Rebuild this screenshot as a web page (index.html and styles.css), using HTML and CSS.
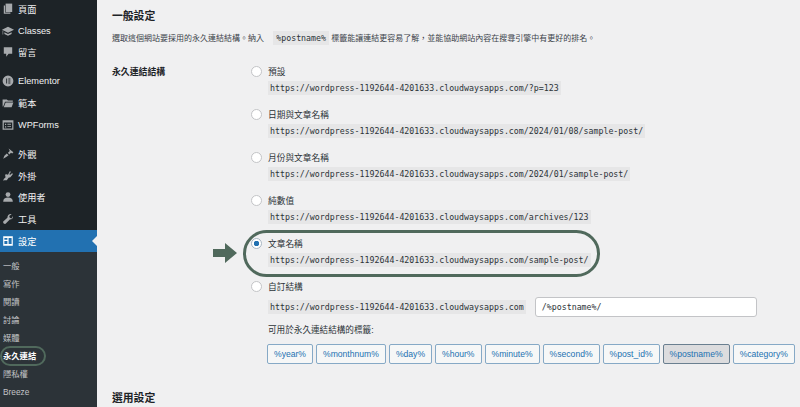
FILE: index.html
```html
<!DOCTYPE html>
<html lang="zh-Hant">
<head>
    <meta charset="UTF-8">
    <title>永久連結設定</title>
    <link rel="stylesheet" href="styles.css">
</head>
<body>
    <div class="sidebar">
        <div class="menu-group">
            <div class="menu-item">
                <svg class="icon" viewBox="0 0 20 20"><path d="M6 1h11v14H6z"/><path d="M3 4h2v12h9v2H3z"/></svg>頁面
            </div>
            <div class="menu-item">
                <svg class="icon" viewBox="0 0 20 20"><path d="M10 3 20 8l-10 5L0 8z"/><path d="M4 12l6 3 6-3v3l-6 3-6-3zM1 9h1v7H1z"/></svg>Classes
            </div>
            <div class="menu-item">
                <svg class="icon" viewBox="0 0 20 20"><path d="M3 2h14v11h-6l-4 5v-5H3z"/></svg>留言
            </div>
        </div>
        <div class="menu-group">
            <div class="menu-item">
                <svg class="icon" viewBox="0 0 20 20"><path fill-rule="evenodd" d="M10 1a9 9 0 1 0 0 18 9 9 0 0 0 0-18zM7 6h1.500v8H7zM10.500 6H14v1.500h-3.500zM10.500 9.200H14v1.500h-3.500zM10.500 12.500H14V14h-3.500z"/></svg>Elementor
            </div>
            <div class="menu-item">
                <svg class="icon" viewBox="0 0 20 20"><path d="M1 4h7l2 2h8v2H5l-3 8H1z"/><path d="M6 9h13l-3 8H3z"/></svg>範本
            </div>
            <div class="menu-item">
                <svg class="icon" viewBox="0 0 20 20"><path fill-rule="evenodd" d="M1 2h18v16H1zM3 6v10h14V6zM5 8h2v2H5zM9 8h6v1.500H9zM5 12h2v2H5zM9 12h6v1.500H9z"/></svg>WPForms
            </div>
        </div>
        <div class="menu-group last">
            <div class="menu-item">
                <svg class="icon" viewBox="0 0 20 20"><path d="M11 1l8 6-2 2-2-1-3 3-2-3 3-3-1-2zM8 9l3 3-4 3-5 3 2-5z"/></svg>外觀
            </div>
            <div class="menu-item">
                <svg class="icon" viewBox="0 0 20 20"><path d="M13 2l2 1-3 4 2 1 3-3 1 2-4 5-3 1-3 4H4l-2 1 1-3 3-3-1-4 2-1 3 1z"/></svg>外掛
            </div>
            <div class="menu-item">
                <svg class="icon" viewBox="0 0 20 20"><circle cx="10" cy="6" r="4"/><path d="M2 18c0-5 3-7 8-7s8 2 8 7z"/></svg>使用者
            </div>
            <div class="menu-item">
                <svg class="icon" viewBox="0 0 20 20"><path d="M18 5c1 3-1 6-5 6L6 18c-2 1-5-2-4-4l7-6c0-4 3-7 7-6l-4 3 1 3 3 1z"/></svg>工具
            </div>
            <div class="menu-item active">
                <svg class="icon" viewBox="0 0 20 20"><path fill-rule="evenodd" d="M2 2h16v16H2zM4 5v3h5V5zM11 5v10h5V5zM4 10v5h5v-5z"/></svg>設定
            </div>
        </div>
        <div class="submenu">
            <div class="sub-item">一般</div>
            <div class="sub-item">寫作</div>
            <div class="sub-item">閱讀</div>
            <div class="sub-item">討論</div>
            <div class="sub-item">媒體</div>
            <div class="sub-item current">永久連結</div>
            <div class="sub-item">隱私權</div>
            <div class="sub-item">Breeze</div>
        </div>
        <div class="side-ring"></div>
    </div>

    <div class="main">
        <h2 class="title">一般設定</h2>
        <p class="intro">選取這個網站要採用的永久連結結構。納入 <code class="tag-code">%postname%</code> 標籤能讓連結更容易了解，並能協助網站內容在搜尋引擎中有更好的排名。</p>

        <div class="form-row">
            <div class="form-label">永久連結結構</div>
            <div class="options">
                <div class="option">
                    <div class="option-name"><span class="radio"></span>預設</div>
                    <code class="url">https://wordpress-1192644-4201633.cloudwaysapps.com/?p=123</code>
                </div>
                <div class="option">
                    <div class="option-name"><span class="radio"></span>日期與文章名稱</div>
                    <code class="url">https://wordpress-1192644-4201633.cloudwaysapps.com/2024/01/08/sample-post/</code>
                </div>
                <div class="option">
                    <div class="option-name"><span class="radio"></span>月份與文章名稱</div>
                    <code class="url">https://wordpress-1192644-4201633.cloudwaysapps.com/2024/01/sample-post/</code>
                </div>
                <div class="option">
                    <div class="option-name"><span class="radio"></span>純數值</div>
                    <code class="url">https://wordpress-1192644-4201633.cloudwaysapps.com/archives/123</code>
                </div>
                <div class="option selected">
                    <div class="option-name"><span class="radio checked"></span>文章名稱</div>
                    <code class="url">https://wordpress-1192644-4201633.cloudwaysapps.com/sample-post/</code>
                    <svg class="arrow" viewBox="0 0 24 20"><path d="M0 6h12V0l12 10-12 10v-6H0z"/></svg>
                    <div class="ring"></div>
                </div>
                <div class="option custom">
                    <div class="option-name"><span class="radio"></span>自訂結構</div>
                    <div class="custom-row">
                        <code class="url">https://wordpress-1192644-4201633.cloudwaysapps.com</code>
                        <div class="text-input">/%postname%/</div>
                    </div>
                    <div class="tags-title">可用於永久連結結構的標籤:</div>
                    <div class="tags">
                        <span class="tag">%year%</span>
                        <span class="tag">%monthnum%</span>
                        <span class="tag">%day%</span>
                        <span class="tag">%hour%</span>
                        <span class="tag">%minute%</span>
                        <span class="tag">%second%</span>
                        <span class="tag">%post_id%</span>
                        <span class="tag on">%postname%</span>
                        <span class="tag">%category%</span>
                    </div>
                </div>
            </div>
        </div>
        <h2 class="title optional">選用設定</h2>
    </div>
</body>
</html>
```

FILE: styles.css
```css
* {
    box-sizing: border-box;
}
html, body {
    height: 407px;
    overflow: hidden;
}
body {
    margin: 0;
    display: flex;
    background: #f0f0f1;
    color: #2c3338;
    font-family: "Liberation Sans", "Noto Sans CJK TC", sans-serif;
    font-size: 9.5px;
}
.sidebar {
    position: relative;
    width: 97px;
    flex: none;
    background: #1d2327;
    color: #f0f0f1;
}
.menu-group {
    padding-bottom: 7.500px;
}
.menu-group.last {
    padding-bottom: 0;
}
.menu-item {
    display: flex;
    align-items: center;
    height: 21.700px;
    padding-left: 2px;
    font-size: 9.200px;
    position: relative;
}
.menu-group:first-child {
    margin-top: -2px;
}
.icon {
    width: 12px;
    height: 12px;
    margin-right: 4px;
    fill: #a7aaad;
    flex: none;
}
.menu-item.active {
    background: #2271b1;
    color: #fff;
}
.menu-item.active .icon {
    fill: #fff;
}
.menu-item.active::after {
    content: "";
    position: absolute;
    right: 0;
    top: 6px;
    border: 5px solid transparent;
    border-right-color: #f0f0f1;
    border-left: 0;
}
.submenu {
    background: #2c3338;
    padding: 5px 0 0 3px;
    height: 160px;
    color: #c3c4c7;
    font-size: 8.300px;
}
.sub-item {
    height: 18px;
    line-height: 18px;
}
.sub-item.current {
    color: #fff;
    font-weight: bold;
}
.side-ring {
    position: absolute;
    left: 0;
    top: 346px;
    width: 46px;
    height: 20px;
    border: 2px solid #50695c;
    border-radius: 10px;
}
.main {
    flex: 1;
    padding-left: 15px;
    min-width: 0;
}
.title {
    margin: 9px 0 0;
    font-size: 10.800px;
    line-height: 15px;
    color: #1d2327;
}
.title.optional {
    margin-top: 27px;
}
.intro {
    margin: 7px 0 0;
    line-height: 15px;
    font-size: 8px;
    white-space: nowrap;
    color: #3c434a;
}
.tag-code, .url {
    font-family: "DejaVu Sans Mono", "Liberation Mono", monospace;
    font-size: 8.280px;
    background: #e6e6e7;
    color: #2c3338;
}
.tag-code {
    margin-left: 7px;
    padding: 2px 3px;
}
.form-row {
    display: flex;
    margin-top: 16px;
}
.form-label {
    width: 139px;
    flex: none;
    padding-top: 2px;
    font-weight: bold;
    font-size: 8.900px;
    line-height: 16px;
    color: #1d2327;
}
.options {
    flex: 1;
    margin-top: 1px;
}
.option {
    position: relative;
    height: 43px;
}
.option-name {
    display: flex;
    align-items: center;
    height: 16px;
    font-size: 8.700px;
    color: #2c3338;
}
.radio {
    width: 11px;
    height: 11px;
    margin-right: 6px;
    border: 1px solid #c3c4c7;
    border-radius: 50%;
    background: #fff;
    flex: none;
}
.radio.checked {
    border-color: #a9b7c4;
    background: radial-gradient(circle, #2271b1 0 2.500px, #fff 3px);
}
.url {
    display: inline-block;
    margin: 2px 0 0 17px;
    line-height: 12px;
    padding: 1px 2px;
}
.arrow {
    position: absolute;
    left: -38px;
    top: 8px;
    width: 24px;
    height: 20px;
    fill: #50695c;
}
.ring {
    position: absolute;
    left: -8px;
    top: -5px;
    width: 357px;
    height: 47px;
    border: 3px solid #50695c;
    border-radius: 23.500px;
}
.custom {
    height: auto;
}
.custom-row {
    display: flex;
    align-items: center;
    margin-top: 3px;
}
.custom-row .url {
    margin-top: 0;
}
.text-input {
    width: 222px;
    height: 20px;
    margin-left: 9px;
    padding-left: 6px;
    border: 1px solid #c3c4c7;
    border-radius: 3px;
    background: #fff;
    font-family: "DejaVu Sans Mono", "Liberation Mono", monospace;
    font-size: 8.280px;
    line-height: 18px;
    color: #2c3338;
}
.tags-title {
    margin: 6px 0 0 17px;
    font-size: 8.600px;
    line-height: 14px;
}
.tags {
    display: flex;
    gap: 3px;
    margin: 7px 0 0 16px;
}
.tag {
    height: 20px;
    padding: 0 6px;
    line-height: 18px;
    font-size: 8.600px;
    color: #2271b1;
    background: #f6f7f7;
    border: 1px solid #86a9c6;
    border-radius: 2px;
}
.tag.on {
    background: #dcdcde;
    border-color: #6a7f90;
}
```
